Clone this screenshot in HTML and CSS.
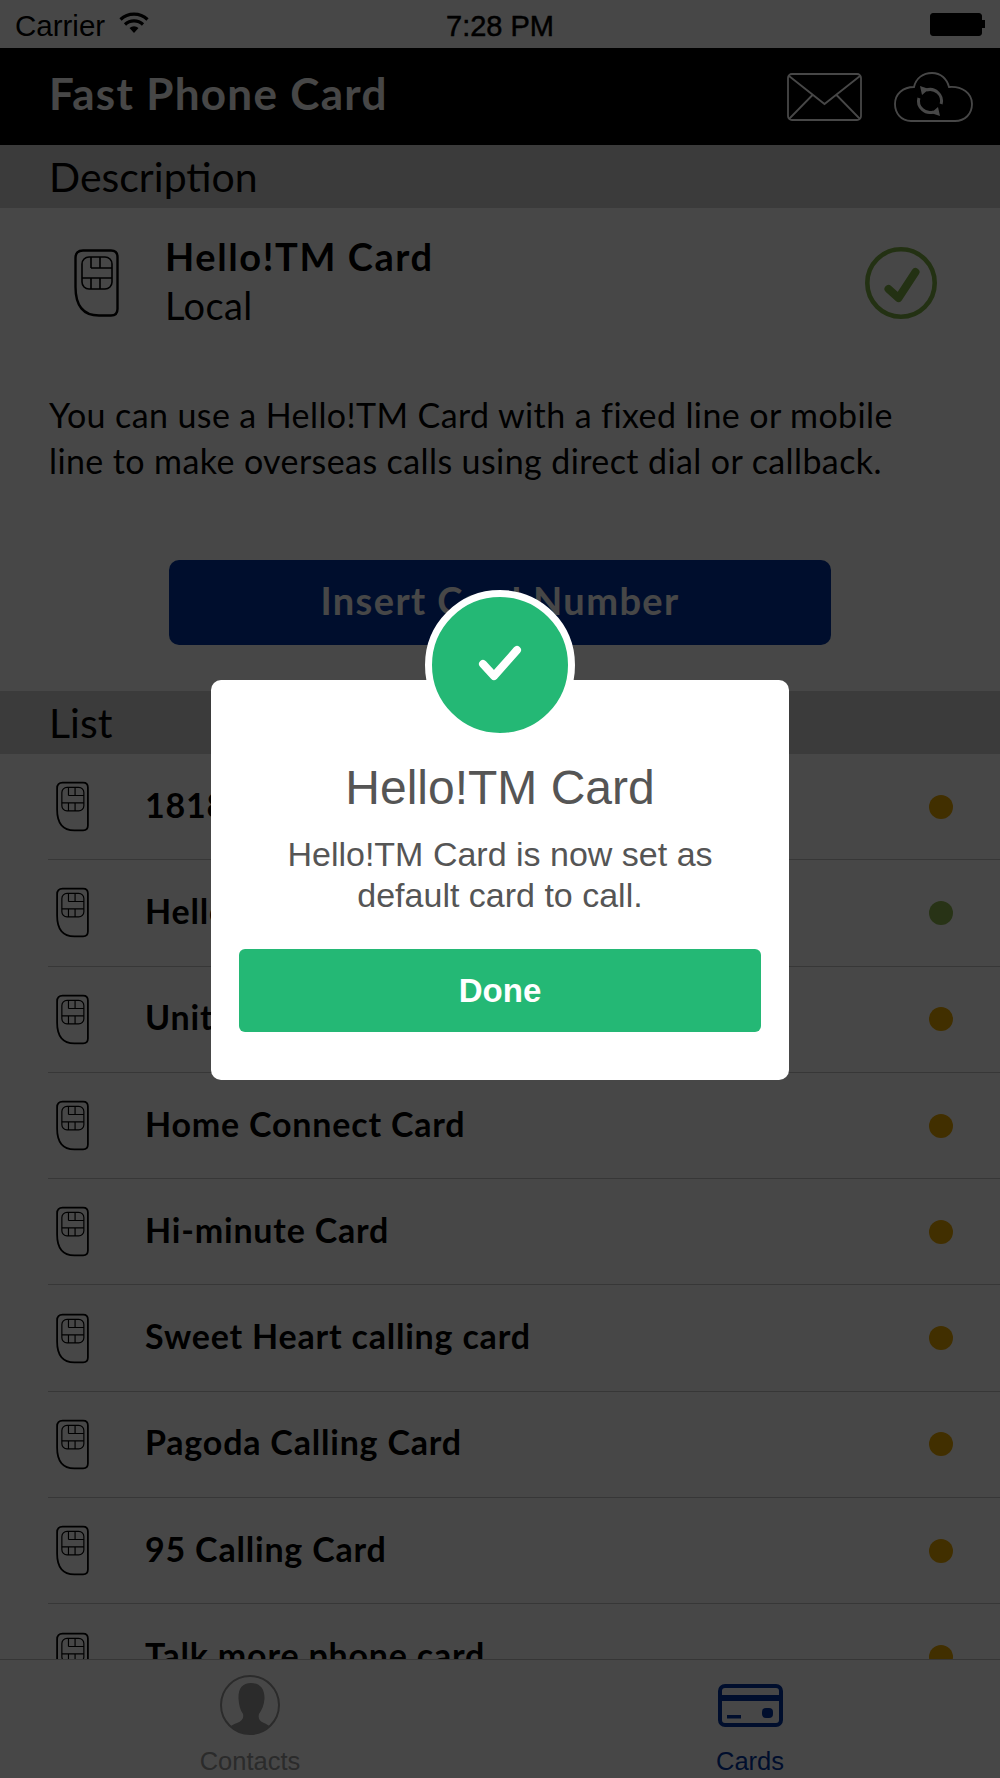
FILE: index.html
```html
<!DOCTYPE html>
<html lang="en">
<head>
  <meta charset="UTF-8" />
  <title>Fast Phone Card</title>
  <link rel="stylesheet" href="styles.css">
</head>
<body>

  <svg class="defs" width="0" height="0">
    <symbol id="sim" viewBox="0 0 45 68">
      <path d="M9 1.5H37Q43.5 1.5 43.5 8V60Q43.5 66.5 37 66.5H25Q1.5 66.5 1.5 38V9Q1.5 1.5 9 1.5Z" fill="none" stroke="#000" stroke-width="2.4"/>
      <rect x="8" y="8" width="30" height="32" rx="7" fill="none" stroke="#000" stroke-width="1.6"/>
      <path d="M8 29H38M17 19H38M17 8V19M26 8V19M17 29V40M26 29V40" fill="none" stroke="#000" stroke-width="1.6"/>
    </symbol>
  </svg>

  <div class="app">
    <div class="status-bar">
      <div class="status-left">
        <span>Carrier</span>
        <svg class="wifi" viewBox="0 0 30 22">
          <path d="M1.5 8.500a19.500 19.500 0 0 1 27 0M6 13.500a13 13 0 0 1 18 0" fill="none" stroke="#000" stroke-width="3.200"/>
          <path d="M10.500 17a7 7 0 0 1 9 0L15 22Z" fill="#000"/>
        </svg>
      </div>
      <div class="status-time">7:28 PM</div>
      <div class="battery"><div class="battery-body"></div><div class="battery-tip"></div></div>
    </div>

    <div class="app-header">
      <h1>Fast Phone Card</h1>
      <div class="header-icons">
        <svg class="mail-icon" viewBox="0 0 75 48">
          <rect x="1" y="1" width="73" height="46" rx="4" fill="none" stroke="#fff" stroke-width="1.8"/>
          <path d="M2 3L37.5 31L73 3M2 46L25.5 22M73 46L49.5 22" fill="none" stroke="#fff" stroke-width="1.8"/>
        </svg>
        <svg class="cloud-icon" viewBox="0 0 79 50">
          <path d="M17 49C7 49 1 41 1 32C1 22 9 15 20 15C22 6 29 1 38 1C47 1 53 7 55 15C68 14 78 21 78 32C78 42 71 49 61 49Z" fill="none" stroke="#fff" stroke-width="1.8"/>
          <path d="M32 18.200A11.500 11.500 0 0 1 47.100 32M39.900 39.800A11.500 11.500 0 0 1 24.900 26" fill="none" stroke="#fff" stroke-width="3"/>
          <path d="M26 14L35 17L28 23ZM46 44L37 41L44 35Z" fill="#fff"/>
        </svg>
      </div>
    </div>

    <div class="band">Description</div>

    <div class="current-card">
      <svg class="sim-big"><use href="#sim"/></svg>
      <div class="current-info">
        <div class="current-name">Hello!TM Card</div>
        <div class="current-type">Local</div>
      </div>
      <svg class="check-big" viewBox="0 0 72 72">
        <circle cx="36" cy="36" r="33.700" fill="none" stroke="#7fb045" stroke-width="4.600"/>
        <path d="M23.500 42L33.500 51L50.500 25" fill="none" stroke="#7fb045" stroke-width="8" stroke-linecap="round" stroke-linejoin="round"/>
      </svg>
    </div>

    <p class="description">You can use a Hello!TM Card with a fixed line or mobile<br>line to make overseas calls using direct dial or callback.</p>

    <button class="insert-btn">Insert Card Number</button>

    <div class="band">List</div>

    <div class="card-list">
      <div class="card-row"><svg class="sim-small"><use href="#sim"/></svg><span class="card-name">1818 Card</span><span class="dot"></span></div>
      <div class="card-row"><svg class="sim-small"><use href="#sim"/></svg><span class="card-name">Hello!TM Card</span><span class="dot active"></span></div>
      <div class="card-row"><svg class="sim-small"><use href="#sim"/></svg><span class="card-name">United Card</span><span class="dot"></span></div>
      <div class="card-row"><svg class="sim-small"><use href="#sim"/></svg><span class="card-name">Home Connect Card</span><span class="dot"></span></div>
      <div class="card-row"><svg class="sim-small"><use href="#sim"/></svg><span class="card-name">Hi-minute Card</span><span class="dot"></span></div>
      <div class="card-row"><svg class="sim-small"><use href="#sim"/></svg><span class="card-name">Sweet Heart calling card</span><span class="dot"></span></div>
      <div class="card-row"><svg class="sim-small"><use href="#sim"/></svg><span class="card-name">Pagoda Calling Card</span><span class="dot"></span></div>
      <div class="card-row"><svg class="sim-small"><use href="#sim"/></svg><span class="card-name">95 Calling Card</span><span class="dot"></span></div>
      <div class="card-row"><svg class="sim-small"><use href="#sim"/></svg><span class="card-name">Talk more phone card</span><span class="dot"></span></div>
    </div>

    <div class="tab-bar">
      <div class="tab">
        <svg class="tab-contacts" viewBox="0 0 60 60">
          <defs><clipPath id="faceClip"><circle cx="30" cy="30" r="29"/></clipPath></defs>
          <circle cx="30" cy="30" r="29" fill="none" stroke="#999" stroke-width="2"/>
          <path clip-path="url(#faceClip)" d="M31 8C22 8 18 14 18.500 24C19 30 20 35 23 39C24 43 22 46 17 48C11 50 7 53 5 60H55C53 53 49 50 44 48C39 46 38 43 39 39C42 35 44 30 44.500 24C45 14 40 8 31 8Z" fill="#999"/>
        </svg>
        <span>Contacts</span>
      </div>
      <div class="tab tab-active">
        <svg class="tab-cards" viewBox="0 0 65 43">
          <rect x="2" y="2" width="61" height="39" rx="5" fill="none" stroke="#0035a0" stroke-width="4"/>
          <rect x="2" y="11" width="61" height="6" fill="#0035a0"/>
          <rect x="9" y="31" width="14" height="3.500" fill="#0035a0"/>
          <rect x="44" y="24" width="11" height="10" rx="4" fill="#0035a0"/>
        </svg>
        <span>Cards</span>
      </div>
    </div>

    <div class="overlay"></div>

    <div class="modal">
      <div class="modal-badge">
        <svg viewBox="0 0 44 36" class="modal-check">
          <path d="M5 19L16 31L39 5" fill="none" stroke="#fff" stroke-width="8" stroke-linecap="round" stroke-linejoin="round"/>
        </svg>
      </div>
      <h2>Hello!TM Card</h2>
      <p>Hello!TM Card is now set as<br>default card to call.</p>
      <button class="done-btn">Done</button>
    </div>
  </div>

</body>
</html>
```

FILE: styles.css
```css
* {
  box-sizing: border-box;
}

body {
  margin: 0;
  padding: 0;
  background-color: #fff;
  font-family: "Lato", sans-serif;
  color: #000;
}

.defs {
  display: block;
  height: 0;
}

.app {
  position: relative;
  width: 1000px;
  height: 1778px;
  overflow: hidden;
  display: flex;
  flex-direction: column;
}

/* status bar */
.status-bar {
  height: 48px;
  flex-shrink: 0;
  padding: 4px 15px 0;
  display: flex;
  align-items: center;
  font-family: "Liberation Sans", sans-serif;
  font-size: 29.500px;
}

.status-left {
  flex: 1;
  display: flex;
  align-items: center;
  gap: 14px;
}

.wifi {
  width: 30px;
  height: 22px;
  margin-top: -8px;
}

.status-time {
  text-align: center;
  white-space: nowrap;
  font-size: 29px;
  -webkit-text-stroke: 0.5px #000;
}

.battery {
  flex: 1;
  display: flex;
  align-items: center;
  justify-content: flex-end;
  margin-top: -4px;
}

.battery-body {
  width: 52px;
  height: 23px;
  background-color: #000;
  border: 1px solid #000;
  border-radius: 3px;
}

.battery-tip {
  width: 3px;
  height: 8px;
  background-color: #000;
}

/* header */
.app-header {
  height: 97px;
  flex-shrink: 0;
  background-color: #000;
  padding: 0 27px 0 49px;
  display: flex;
  align-items: center;
  justify-content: space-between;
}

.app-header h1 {
  margin: 0 0 7px;
  font-size: 44px;
  font-weight: 700;
  letter-spacing: 1.3px;
  color: #fff;
}

.header-icons {
  display: flex;
  align-items: center;
  gap: 32px;
}

.mail-icon {
  width: 75px;
  height: 48px;
}

.cloud-icon {
  width: 79px;
  height: 50px;
}

/* section bands */
.band {
  height: 63px;
  flex-shrink: 0;
  background-color: #d2d2d2;
  padding-left: 49px;
  font-size: 41px;
  line-height: 63px;
}

/* selected card */
.current-card {
  height: 150px;
  flex-shrink: 0;
  padding: 0 63px 0 74px;
  display: flex;
  align-items: center;
}

.sim-big {
  width: 45px;
  height: 68px;
}

.current-info {
  flex: 1;
  margin: 0 0 5px 46px;
}

.current-name {
  font-size: 38px;
  font-weight: 700;
  letter-spacing: 1.6px;
  line-height: 48px;
}

.current-type {
  font-size: 38px;
  letter-spacing: 0.4px;
  line-height: 50px;
}

.check-big {
  width: 72px;
  height: 72px;
}

.description {
  margin: 34px 0 0 49px;
  font-size: 34px;
  letter-spacing: 0.4px;
  line-height: 46px;
  white-space: nowrap;
}

.insert-btn {
  display: block;
  width: 662px;
  height: 85px;
  margin: 76px 0 46px 169px;
  padding-bottom: 7px;
  flex-shrink: 0;
  background-color: #0035a0;
  color: #fff;
  border: none;
  border-radius: 10px;
  font-family: "Lato", sans-serif;
  font-size: 38px;
  font-weight: 700;
  letter-spacing: 1.4px;
}

/* list */
.card-list {
  flex: 1;
  min-height: 0;
  overflow: hidden;
  padding-left: 48px;
}

.card-row {
  height: 106.3px;
  border-bottom: 1px solid #c4c4c4;
  padding: 0 47px 0 8px;
  display: flex;
  align-items: center;
}

.sim-small {
  width: 33px;
  height: 51px;
}

.card-name {
  flex: 1;
  margin: 0 0 5px 56px;
  font-size: 34px;
  font-weight: 700;
  letter-spacing: 0.8px;
}

.dot {
  width: 24px;
  height: 24px;
  border-radius: 50%;
  background-color: #eaa800;
}

.dot.active {
  background-color: #8fb850;
}

/* tabs */
.tab-bar {
  height: 119px;
  flex-shrink: 0;
  background-color: #fff;
  border-top: 1px solid #c0c0c0;
  display: flex;
}

.tab {
  width: 50%;
  display: flex;
  flex-direction: column;
  align-items: center;
  font-family: "Liberation Sans", sans-serif;
  font-size: 25.500px;
  color: #999;
}

.tab span {
  position: absolute;
  bottom: 2px;
}

.tab-contacts {
  width: 60px;
  height: 60px;
  margin-top: 15px;
}

.tab-cards {
  width: 65px;
  height: 43px;
  margin-top: 24px;
}

.tab-active {
  color: #0035a0;
}

/* dimmed layer and dialog */
.overlay {
  position: absolute;
  top: 0;
  left: 0;
  right: 0;
  bottom: 0;
  background-color: rgba(0,0,0,0.72);
}

.modal {
  position: absolute;
  top: 680px;
  left: 211px;
  width: 578px;
  height: 400px;
  padding: 75px 28px 0;
  background-color: #fff;
  border-radius: 10px;
  text-align: center;
  font-family: "Liberation Sans", sans-serif;
  color: #555;
}

.modal-badge {
  position: absolute;
  top: -90px;
  left: 214px;
  width: 150px;
  height: 150px;
  border: 7px solid #fff;
  border-radius: 50%;
  background-color: #24b875;
  display: flex;
  align-items: center;
  justify-content: center;
}

.modal-check {
  width: 44px;
  height: 36px;
  margin-top: -4px;
}

.modal h2 {
  margin: 0;
  font-size: 48px;
  font-weight: 400;
  line-height: 66px;
}

.modal p {
  margin: 13px 0 0;
  font-size: 34px;
  line-height: 41px;
}

.done-btn {
  display: block;
  width: 522px;
  height: 83px;
  margin-top: 33px;
  background-color: #24b875;
  color: #fff;
  border: none;
  border-radius: 6px;
  font-family: "Liberation Sans", sans-serif;
  font-size: 33px;
  font-weight: 700;
}
```
